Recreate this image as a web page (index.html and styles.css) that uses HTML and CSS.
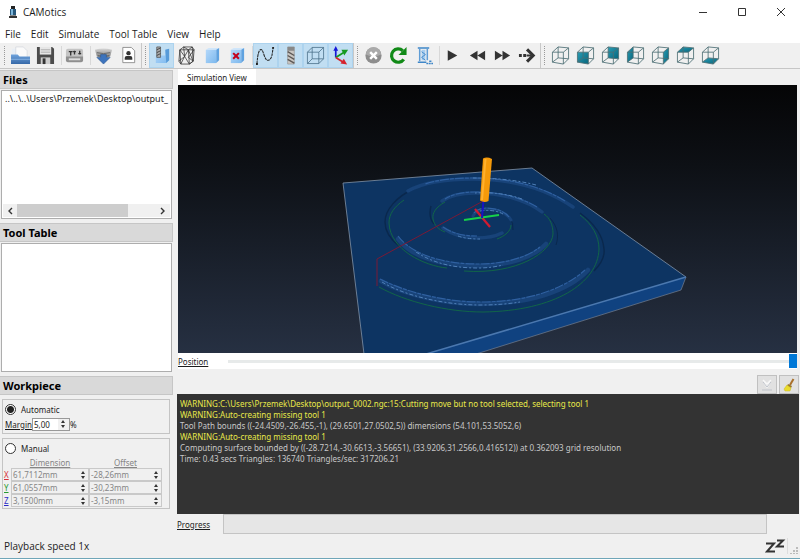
FILE: index.html
```
<!DOCTYPE html>
<html lang="en">
<head>
<meta charset="utf-8">
<title>CAMotics</title>
<link rel="stylesheet" href="styles.css">
</head>
<body>
<svg class="defs" aria-hidden="true">
  <defs>
    <linearGradient id="teal" x1="0" y1="0" x2="1" y2="1"><stop offset="0" stop-color="#2a9cb4"/><stop offset="1" stop-color="#06657c"/></linearGradient>
    <linearGradient id="sky" x1="0" y1="0" x2="1" y2="1"><stop offset="0" stop-color="#b4d8fa"/><stop offset="1" stop-color="#7db9ee"/></linearGradient>
    <linearGradient id="steel" x1="0" y1="0" x2="0" y2="1"><stop offset="0" stop-color="#d8d8d8"/><stop offset="1" stop-color="#777"/></linearGradient>
    <linearGradient id="folder" x1="0" y1="0" x2="0" y2="1"><stop offset="0" stop-color="#6fa3dc"/><stop offset="1" stop-color="#3568a8"/></linearGradient>
    <symbol id="cube" viewBox="0 0 20 20">
      <path d="M1.500 6.500H13V19L1.500 17ZM1.500 6.500 7.500 1 18.500 2 13 6.500M18.500 2V13.500L13 19M7.500 1V12.500L1.500 17M7.500 12.500 18.500 13.500" fill="none" stroke="#4d6f74" stroke-width=".9" stroke-linejoin="round"/>
    </symbol>
  </defs>
</svg>
<div class="window">
  <header class="titlebar">
    <svg class="app-icon" viewBox="0 0 10 14"><path d="M3 1h4v3H3z" fill="#222"/><path d="M2 4h6v6H2z" fill="#27587c"/><path d="M3 4h2v6H3z" fill="#7db7dc"/><path d="M1 11h8v2H1z" fill="#333"/><path d="M2 10h6v1H2z" fill="#888"/></svg>
    <h1 class="app-title">CAMotics</h1>
    <div class="window-buttons">
      <button aria-label="Minimize"><svg viewBox="0 0 10 10"><path d="M1 5.500h8"/></svg></button>
      <button aria-label="Maximize"><svg viewBox="0 0 10 10"><path d="M1.500 1.500h7v7h-7z"/></svg></button>
      <button aria-label="Close"><svg viewBox="0 0 10 10"><path d="m1 1 8 8M9 1 1 9"/></svg></button>
    </div>
  </header>
  <nav class="menubar">
    <button>File</button><button>Edit</button><button>Simulate</button><button>Tool Table</button><button>View</button><button>Help</button>
  </nav>
  <div class="toolbar" role="toolbar">
    <span class="grip first"></span>
    <button aria-label="Open"><svg viewBox="0 0 20 20"><path d="M1 3h12l3 3v8H1z" fill="#e8eef5"/><path d="M5 1h8l4 4v8H5z" fill="#fafafa" stroke="#c9d0d8" stroke-width=".6"/><path d="M0 9h7l2 2h11v8H0z" fill="url(#folder)"/><path d="M0 14h20" stroke="#88b3e4"/></svg></button>
    <button aria-label="Save"><svg viewBox="0 0 20 20"><path d="M1 1h16l2 2v16H1z" fill="#4c4c4c"/><path d="M4 1h12v8H4z" fill="#e6e6e6"/><path d="M5 4h10M5 6.500h10" stroke="#aaa"/><path d="M5 12h10v7H5z" fill="#ccc"/><path d="M7 13h3v6H7z" fill="#333"/></svg></button>
    <span class="sep"></span>
    <button aria-label="Tool table"><svg viewBox="0 0 20 20"><path d="M1 5q0-2 2-2h14q2 0 2 2v9q0 2-2 2H3q-2 0-2-2z" fill="#c4c4c4"/><path d="M1 11h18v4q0 2-2 2H3q-2 0-2-2z" fill="#8f8f8f"/><path d="M4 13h12v2H4z" fill="#ddd"/><path d="M4 6h4M6 6v4M10 5v4M8.500 6h3M14 8h3M15.500 5v4" stroke="#333" stroke-width="1.400"/></svg></button>
    <span class="sep"></span>
    <button aria-label="Export"><svg viewBox="0 0 20 20"><path d="M1 4q9-3 18 0l-2 7q-7 3-14 0z" fill="url(#steel)"/><path d="M3 7q7 2 14 0M4 10q6 2 12 0" stroke="#666" fill="none"/><path d="M7 9h6v3h4l-7 7-7-7h4z" fill="#3d74bd" stroke="#285590" stroke-width=".6"/></svg></button>
    <button aria-label="Profile"><svg viewBox="0 0 20 20"><path d="M4 1.500h9l3.500 3.500v12.500H4z" fill="#fff" stroke="#777" stroke-width=".8"/><circle cx="10" cy="7.500" r="2.300" fill="#333"/><path d="M6 14.500v-2q0-2 2-2h4q2 0 2 2v2z" fill="#333"/></svg></button>
    <span class="grip"></span>
    <button class="on" aria-label="Show cut surface"><svg viewBox="0 0 20 20"><path d="M4 10h10V4l4-1v12l-3 3H4z" fill="url(#sky)"/><path d="M14 4l4-1v12l-3 3z" fill="#579bd9"/><path d="M5 1h4v11H5z" fill="#aaa" stroke="#555" stroke-width=".8"/><path d="m5 4 4-2M5 7l4-2M5 10l4-2" stroke="#444"/></svg></button>
    <button aria-label="Wireframe"><svg viewBox="0 0 20 20"><path d="M3 4 7 1h9l2 3-1 12-4 3H4l-2-3zM3 4h9l6 0M12 4l1 15M3 4l5 7-4 8M12 4 8 11l5 8M7 1l5 3 4-3M12 4l5 12-4 3M18 4l-6 8 5 4M2 16 8 11M3 4l1 15M8 11 7 1M16 1l1 15" fill="none" stroke="#333" stroke-width=".8"/></svg></button>
    <button aria-label="Workpiece"><svg viewBox="0 0 20 20"><path d="M4 4 7 2h11l-3 2z" fill="#cfe6fb"/><path d="M4 4h11v14H4z" fill="url(#sky)"/><path d="m15 4 3-2v13l-3 3z" fill="#5fa2e0"/></svg></button>
    <button aria-label="Hide workpiece"><svg viewBox="0 0 20 20"><path d="M4 4 7 2h11l-3 2z" fill="#cfe6fb"/><path d="M4 4h11v14H4z" fill="url(#sky)"/><path d="m15 4 3-2v13l-3 3z" fill="#5fa2e0"/><path d="m6.500 7.500 6 6M12.500 7.500l-6 6" stroke="#c4001c" stroke-width="2.200"/></svg></button>
    <span class="sep"></span>
    <button class="on" aria-label="Show path"><svg viewBox="0 0 20 20"><path d="M1 19C2 5 4 3 6 4S9 16 13 15 17 8 18 2" fill="none" stroke="#222" stroke-width="1.100" stroke-dasharray="3 .7"/><path d="M0 18h2v2H0zM17 1h2v2h-2z" fill="#222"/></svg></button>
    <button class="on" aria-label="Show tool"><svg viewBox="0 0 20 20"><path d="M7 1h7v18H7z" fill="#c9c6c2" stroke="#888" stroke-width=".6"/><path d="M7 1h7v4H7z" fill="#888"/><path d="m7 6 7 4M7 10l7 4M7 14l7 4" stroke="#5c5856" stroke-width="1.500"/></svg></button>
    <button class="on" aria-label="Show bounds"><svg viewBox="0 0 20 20"><path d="M1.500 6.500h12v12h-12zM6.500 1.500h12v12h-12zM1.500 6.500l5-5M13.500 6.500l5-5M1.500 18.500l5-5M13.500 18.500l5-5" fill="none" stroke="#456b84" stroke-width=".8"/></svg></button>
    <button class="on" aria-label="Show axes"><svg viewBox="0 0 20 20"><path d="M5 12V4" stroke="#1717d8" stroke-width="1.800"/><path d="M2.500 5 5 0l2.500 5z" fill="#1717d8"/><path d="m5 12 8-5" stroke="#159a22" stroke-width="1.800"/><path d="m11 4 7 0-4 6z" fill="#159a22"/><path d="m5 12 8 5" stroke="#d5232d" stroke-width="1.800"/><path d="m13.500 13.500 3.500 6-7-1z" fill="#d5232d"/></svg></button>
    <span class="grip"></span>
    <button aria-label="Stop"><svg viewBox="0 0 20 20"><circle cx="10" cy="10" r="8.500" fill="#8d8d8d"/><path d="M2 9a8 8 0 0 1 16 0q-8 4-16 0" fill="#aaa"/><path d="m6.500 6.500 7 7M13.500 6.500l-7 7" stroke="#fff" stroke-width="2.600"/></svg></button>
    <button aria-label="Reload"><svg viewBox="0 0 20 20"><path d="M15.500 14A7 7 0 1 1 14.500 5" fill="none" stroke="#118a17" stroke-width="3.400"/><path d="M18.500 1v8.500H10z" fill="#118a17"/></svg></button>
    <button aria-label="Optimize"><svg viewBox="0 0 20 20"><path d="M4 2h12M4 17h9" stroke="#3e86c8" stroke-width="1.600"/><path d="M6 3v13M14 3v12" stroke="#5f9dd6" stroke-width="1.600"/><path d="M8 4h4v11H8z" fill="#a7cdef"/><path d="m8 6 4 3-4 3 4 3" fill="none" stroke="#3e86c8"/><path d="M13 18.500h7M16 16h3" stroke="#3e86c8" stroke-width="1.500" stroke-dasharray="2 .6"/></svg></button>
    <span class="sep"></span>
    <button aria-label="Play"><svg viewBox="0 0 20 20"><path d="M5 4.500 15 10 5 15.500z" fill="#333"/></svg></button>
    <button aria-label="Slower"><svg viewBox="0 0 20 20"><path d="M10 5v10l-8-5zM18 5v10l-8-5z" fill="#333"/></svg></button>
    <button aria-label="Faster"><svg viewBox="0 0 20 20"><path d="M2 5v10l8-5zM10 5v10l8-5z" fill="#333"/></svg></button>
    <button aria-label="Step"><svg viewBox="0 0 20 20"><path d="m9.500 3.500 6.500 6.500-6.500 6.500" fill="none" stroke="#333" stroke-width="3.200"/><path d="M1 8.500h3v3H1zM5.500 8.500h3v3h-3zM9 9h5v2H9z" fill="#333"/></svg></button>
    <span class="grip"></span>
    <button aria-label="Isometric view"><svg viewBox="0 0 20 20"><use href="#cube"/></svg></button>
    <button aria-label="Front view"><svg viewBox="0 0 20 20"><path d="M1.500 6.500H13V19L1.500 17z" fill="url(#teal)"/><use href="#cube"/></svg></button>
    <button aria-label="Back view"><svg viewBox="0 0 20 20"><path d="m7.500 1 11 1v11.500l-11-1z" fill="url(#teal)"/><use href="#cube"/></svg></button>
    <button aria-label="Left view"><svg viewBox="0 0 20 20"><path d="m1.500 6.500 6-5.500v11.500l-6 4.500z" fill="url(#teal)"/><use href="#cube"/></svg></button>
    <button aria-label="Right view"><svg viewBox="0 0 20 20"><path d="M13 6.500 18.500 2v11.500L13 19z" fill="url(#teal)"/><use href="#cube"/></svg></button>
    <button aria-label="Top view"><svg viewBox="0 0 20 20"><path d="m1.500 6.500 6-5.500 11 1-5.500 4.500z" fill="url(#teal)"/><use href="#cube"/></svg></button>
    <button aria-label="Bottom view"><svg viewBox="0 0 20 20"><path d="m1.500 17 6-4.500 11 1L13 19z" fill="url(#teal)"/><use href="#cube"/></svg></button>
  </div>
  <div class="workspace">
    <aside class="sidebar">
      <h2 class="dock-title">Files</h2>
      <div class="list">
        <div class="list-row">..\..\..\Users\Przemek\Desktop\output_</div>
        <div class="hscroll">
          <button aria-label="Scroll left"><svg viewBox="0 0 6 8"><path d="M5 1 2 4l3 3"/></svg></button>
          <div class="hscroll-track"><div class="hscroll-thumb"></div></div>
          <button aria-label="Scroll right"><svg viewBox="0 0 6 8"><path d="m1 1 3 3-3 3"/></svg></button>
        </div>
      </div>
      <h2 class="dock-title">Tool Table</h2>
      <div class="list"></div>
      <h2 class="dock-title">Workpiece</h2>
      <div class="group">
        <label class="choice"><input type="radio" name="mode" checked>Automatic</label>
        <div class="margin-row">
          <label for="margin"><u>Margin</u></label>
          <span class="spin small"><input id="margin" type="text" value="5,00"><span class="arrows"></span></span>
          <span>%</span>
        </div>
      </div>
      <div class="group manual">
        <label class="choice"><input type="radio" name="mode">Manual</label>
        <div class="dims">
          <span></span><u class="head">Dimension</u><u class="head">Offset</u>
          <label class="x" for="dx">X</label>
          <span class="spin"><input id="dx" type="text" value="61,7112mm" disabled><span class="arrows"></span></span>
          <span class="spin"><input aria-label="X offset" type="text" value="-28,26mm" disabled><span class="arrows"></span></span>
          <label class="y" for="dy">Y</label>
          <span class="spin"><input id="dy" type="text" value="61,0557mm" disabled><span class="arrows"></span></span>
          <span class="spin"><input aria-label="Y offset" type="text" value="-30,23mm" disabled><span class="arrows"></span></span>
          <label class="z" for="dz">Z</label>
          <span class="spin"><input id="dz" type="text" value="3,1500mm" disabled><span class="arrows"></span></span>
          <span class="spin"><input aria-label="Z offset" type="text" value="-3,15mm" disabled><span class="arrows"></span></span>
        </div>
      </div>
    </aside>
    <main class="main">
      <div class="sim">
        <div class="tabs"><button class="tab">Simulation View</button></div>
        <div class="view">
          <svg viewBox="178 85 619 268" preserveAspectRatio="xMidYMid slice">
            <path d="M343 183 532 168 686 277 427 354H364z" fill="#0d3462"/>
            <path d="M686 277 681 290 476 354H426z" fill="#104280"/>
            <path d="M364 354 343 183 532 168 686 277" fill="none" stroke="#8193a8" stroke-width=".8"/>
            <path d="M686 277 681 290 476 354" fill="none" stroke="#75808f" stroke-width=".7"/>
            <path d="M686 277 426 354" stroke="#4b78af" stroke-width="1.500"/>
            <g fill="none">
              <g stroke="#0a284d" stroke-width="1.400">
                <path d="M594 271C601 264 605 257 604 249 603 236 595 224 580 213M415 188C396 197 385 210 385 222 385 231 390 239 399 246M431 206Q428 217 434 224"/>
                <path d="M556 245C559 236 558 227 550 218M513 230Q514 223 509 217" stroke-width="1"/>
              </g>
              <g stroke="#184379" stroke-width="4.500" stroke-linecap="round">
                <path d="M381 281C405 295 445 304 480 304 526 304 568 292 588 270M398 239C412 258 444 266 478 266 509 266 535 256 546 244"/>
                <path d="M573 207C545 188 510 179 473 179 447 179 422 183 408 191M542 212C527 200 502 193 475 193 460 193 449 196 442 201M443 228C453 235 464 238 477 238 487 238 496 236 502 233" stroke-width="3.500"/>
                <path d="M511 220Q505 210 487 209 476 209 473 216" stroke-width="3"/>
              </g>
              <g stroke="#2f60a0" stroke-width="1.200" stroke-dasharray="9 1 4 1">
                <path d="M380 279C405 292 445 302 480 302 526 302 563 290 585 270M565 201C539 185 507 178 473 178 453 178 437 180 425 184M398 236C412 255 444 264 478 264 505 264 528 257 540 247M537 207C520 197 500 192 475 192 460 192 451 195 445 199M443 227C453 234 464 236 477 236M509 217Q503 209 487 208 478 208 474 213"/>
              </g>
              <g stroke="#4f80b8" stroke-width="1" stroke-dasharray="4 2 2 2">
                <path d="M382 282C405 296 445 305 480 305 495 305 508 304 520 302M416 252C436 265 458 268 478 268 487 268 495 267 503 265M536 185C517 180 495 178 473 178M522 199C508 194 492 192 475 193M458 236Q466 239 480 239M480 211Q494 209 503 214"/>
              </g>
              <g stroke="#126b45" stroke-width=".9">
                <path d="M379 287C406 302 447 312 483 312 555 311 598 283 599 249 599 236 592 224 580 215M404 200C394 207 389 214 389 223 390 250 425 266 447 268M464 271C517 275 552 252 553 234 553 225 550 218 544 214M445 202C436 207 432 213 433 219 434 225 439 230 445 232M497 239C505 236 511 231 511 225"/>
              </g>
              <path d="M377 286V259L485 200" stroke="#7a1a36" stroke-width="1"/>
              <path d="m475 209 15 18" stroke="#d21b30" stroke-width="2.200"/>
              <path d="m464 220 35-5" stroke="#17d04a" stroke-width="1.800"/>
              <path d="m483.500 200-1.500 18" stroke="#1713c4" stroke-width="2"/>
            </g>
            <path d="m483 158.500q4-2 9 .5l-3.500 42q-4.500 2-8.500-.5z" fill="#f59a0a"/>
            <path d="m485.500 159-3.500 41" stroke="#ffb12e" stroke-width="2"/>
          </svg>
        </div>
        <div class="position">
          <label for="position"><u>Position</u></label>
          <input id="position" type="range" min="0" max="100" value="100">
        </div>
      </div>
      <div class="console-tools">
        <button aria-label="Scroll to end"><svg viewBox="0 0 14 14"><path d="m3 2 4 4 4-4M4 5l3 4 3-4" fill="none" stroke="#f8f8f8" stroke-width="1.500"/><path d="m3 4 4 5 4-5M2 12h10" fill="none" stroke="#bfc3ca"/></svg></button>
        <button aria-label="Clear console"><svg viewBox="0 0 14 14"><path d="m8 7 3.500-6" stroke="#a9702a" stroke-width="2"/><path d="m6 6 4 2-1 2-4-2z" fill="#99752c"/><path d="m5 7 4 3-1 3-5 0-1-2z" fill="#eadb2c" stroke="#c9b820" stroke-width=".5"/></svg></button>
      </div>
      <div class="console">
        <p class="warn">WARNING:C:\Users\Przemek\Desktop\output_0002.ngc:15:Cutting move but no tool selected, selecting tool 1</p>
        <p class="warn">WARNING:Auto-creating missing tool 1</p>
        <p>Tool Path bounds ((-24.4509,-26.455,-1), (29.6501,27.0502,5)) dimensions (54.101,53.5052,6)</p>
        <p class="warn">WARNING:Auto-creating missing tool 1</p>
        <p>Computing surface bounded by ((-28.7214,-30.6613,-3.56651), (33.9206,31.2566,0.416512)) at 0.362093 grid resolution</p>
        <p>Time: 0.43 secs Triangles: 136740 Triangles/sec: 317206.21</p>
      </div>
      <div class="progress-row"><u>Progress</u><div class="progress" role="progressbar" aria-label="Progress"></div></div>
    </main>
  </div>
  <footer class="statusbar">
    <span>Playback speed 1x</span>
    <svg class="idle" viewBox="0 0 34 16"><path d="M1 5.500h8L2 13.500h8M12 2.500h6l-6 6h7" fill="none" stroke="#333" stroke-width="2"/><path d="M22.500 0v16" stroke="#ddd"/><path d="M31 9h2v2h-2zM31 12h2v2h-2zM28 12h2v2h-2zM31 15h2v1h-2zM28 15h2v1h-2zM25 15h2v1h-2z" fill="#bbb"/></svg>
  </footer>
</div>
</body>
</html>
```
FILE: styles.css
```
* { box-sizing: border-box; }

body {
  margin: 0;
  font-family: "Noto Sans", sans-serif;
  font-size: 8px;
  color: #1c1c1c;
}

button, input { font: inherit; color: inherit; }
button { padding: 0; border: 0; background: none; }
h1, h2, p { margin: 0; }
svg { display: block; }
.defs { position: absolute; width: 0; height: 0; }

.window {
  display: flex;
  flex-direction: column;
  height: 100vh;
  background: #f0f0f0;
  border-bottom: 1px solid #6fa6b8;
}

/* Title and menu */
.titlebar {
  display: flex;
  align-items: center;
  height: 24px;
  padding-left: 8px;
  background: #fff;
  font-family: "Open Sans", sans-serif;
}
.app-icon { width: 10px; height: 14px; margin-right: 5px; }
.app-title { font-size: 10px; font-weight: 400; }
.window-buttons { display: flex; margin-left: auto; }
.window-buttons button { display: grid; place-items: center; width: 39px; height: 24px; }
.window-buttons svg { width: 10px; height: 10px; fill: none; stroke: #333; }

.menubar {
  display: flex;
  gap: 10px;
  height: 19px;
  padding-left: 5px;
  background: #fff;
  font-family: "Open Sans", sans-serif;
  font-size: 10px;
}

/* Toolbar */
.toolbar {
  display: flex;
  height: 26px;
  border-bottom: 1px solid #c6c6c6;
}
.toolbar button { display: grid; place-items: center; width: 25px; height: 25px; }
.toolbar svg { width: 19px; height: 19px; }
.toolbar .on { background: #c1def2; border: 1px solid #add3ee; }
.sep { width: 4px; border-right: 1px solid #d8d8d8; margin-block: 3px; }
.grip { width: 8px; border-left: 1px solid #c8c8c8; display: flex; justify-content: center; padding-block: 3px; }
.grip.first { border-left: 0; }
.grip::after { content: ""; border-left: 1px dotted #999; }

/* Panels */
.workspace { display: flex; flex: 1; min-height: 0; }
.sidebar {
  display: flex;
  flex-direction: column;
  width: 22%;
  padding: 1px 3px 25px 0;
}
.dock-title {
  height: 19px;
  padding-left: 3px;
  border: 1px solid #c6c6c6;
  border-left: 0;
  background: #d9d9d9;
  font: 700 11px/17px "Noto Sans", sans-serif;
  color: #000;
}
.list {
  display: flex;
  flex: 1;
  flex-direction: column;
  justify-content: space-between;
  margin: 1px 1px 4px;
  border: 1px solid #adadad;
  background: #fff;
}
.list-row { padding-left: 3px; font-size: 9px; line-height: 16px; white-space: nowrap; overflow: hidden; }
.hscroll { display: flex; height: 13px; margin: 0 1px 1px; background: #f0f0f0; }
.hscroll button { display: grid; place-items: center; width: 14px; }
.hscroll svg { width: 6px; height: 8px; fill: none; stroke: #333; stroke-width: 1.4; }
.hscroll-track { flex: 1; }
.hscroll-thumb { width: 80%; height: 100%; background: #cdcdcd; }

.group { margin: 4px 3px 0 2px; padding: 2px 1px 1px; border: 1px solid #c4c4c4; }
.choice { display: flex; align-items: center; gap: 5px; height: 14px; }
.choice input {
  appearance: none;
  width: 11px;
  height: 11px;
  margin: 0 0 0 1px;
  border: 1px solid #333;
  border-radius: 50%;
  background: #fff;
}
.choice input:checked { background: radial-gradient(circle, #222 3px, #fff 4px); }
.margin-row { display: flex; align-items: center; height: 16px; padding-left: 1px; }
.spin { display: flex; height: 13px; border: 1px solid #c9c9c9; min-width: 0; }
.spin input { flex: 1; width: 0; min-width: 0; padding: 0 0 0 1px; border: 0; background: none; }
.spin input:disabled { color: #858585; }
.spin.small { width: 38px; background: #fff; border-color: #999; }
.arrows { display: flex; flex-direction: column; justify-content: center; align-items: center; gap: 2px; width: 11px; background: #f0f0f0; }
.arrows::before, .arrows::after { content: ""; border: 2px solid transparent; }
.arrows::before { border-top: 0; border-bottom: 3px solid #333; }
.arrows::after { border-bottom: 0; border-top: 3px solid #333; }
.manual { margin-top: 4px; }
.dims { display: grid; grid-template-columns: 7px 78px 73px; padding-top: 3px; }
.dims .head { justify-self: center; line-height: 10px; color: #858585; }
.dims label { line-height: 13px; text-decoration: underline; }
.x { color: #d6303a; }
.y { color: #259a2f; }
.z { color: #2b2bc4; }

/* Simulation */
.main { display: flex; flex: 1; flex-direction: column; min-width: 0; padding: 0 1px 0 1px; }
.sim { display: flex; flex: 1; flex-direction: column; min-height: 0; margin: 0 2px 0 1px; }
.tabs { display: flex; height: 16px; }
.tab { padding: 0 9px; background: #fff; }
.view { flex: 1; min-height: 0; background: linear-gradient(#050506, #0d1015 30%, #263042); }
.view svg { width: 100%; height: 100%; }
.position { display: flex; align-items: center; height: 16px; background: #fff; }
.position label { width: 50px; }
.position input { appearance: none; flex: 1; height: 14px; margin: 0; background: linear-gradient(#e7eaea, #e7eaea) center / 100% 3px no-repeat; }
.position input::-webkit-slider-thumb { appearance: none; width: 8px; height: 14px; background: #0078d7; }

.console-tools { display: flex; justify-content: flex-end; gap: 2px; height: 25px; padding-top: 6px; }
.console-tools button { display: grid; place-items: center; width: 20px; height: 19px; border: 1px solid #c0c0c0; background: #e1e1e1; }
.console-tools svg { width: 14px; height: 14px; }
.console { height: 120px; padding: 4px 3px; background: #333; color: #c8c8c8; line-height: 11px; overflow: hidden; }
.console p { white-space: nowrap; }
.console .warn { color: #e9e94a; }
.progress-row { display: flex; align-items: center; height: 20px; padding-right: 32px; }
.progress-row u { width: 46px; }
.progress { flex: 1; height: 20px; border: 1px solid #c4c4c4; background: #e6e6e6; }

.statusbar { display: flex; align-items: center; justify-content: space-between; height: 24px; padding: 0 1px 0 4px; font-family: "Open Sans", sans-serif; font-size: 10px; }
.idle { width: 34px; height: 16px; }
```
